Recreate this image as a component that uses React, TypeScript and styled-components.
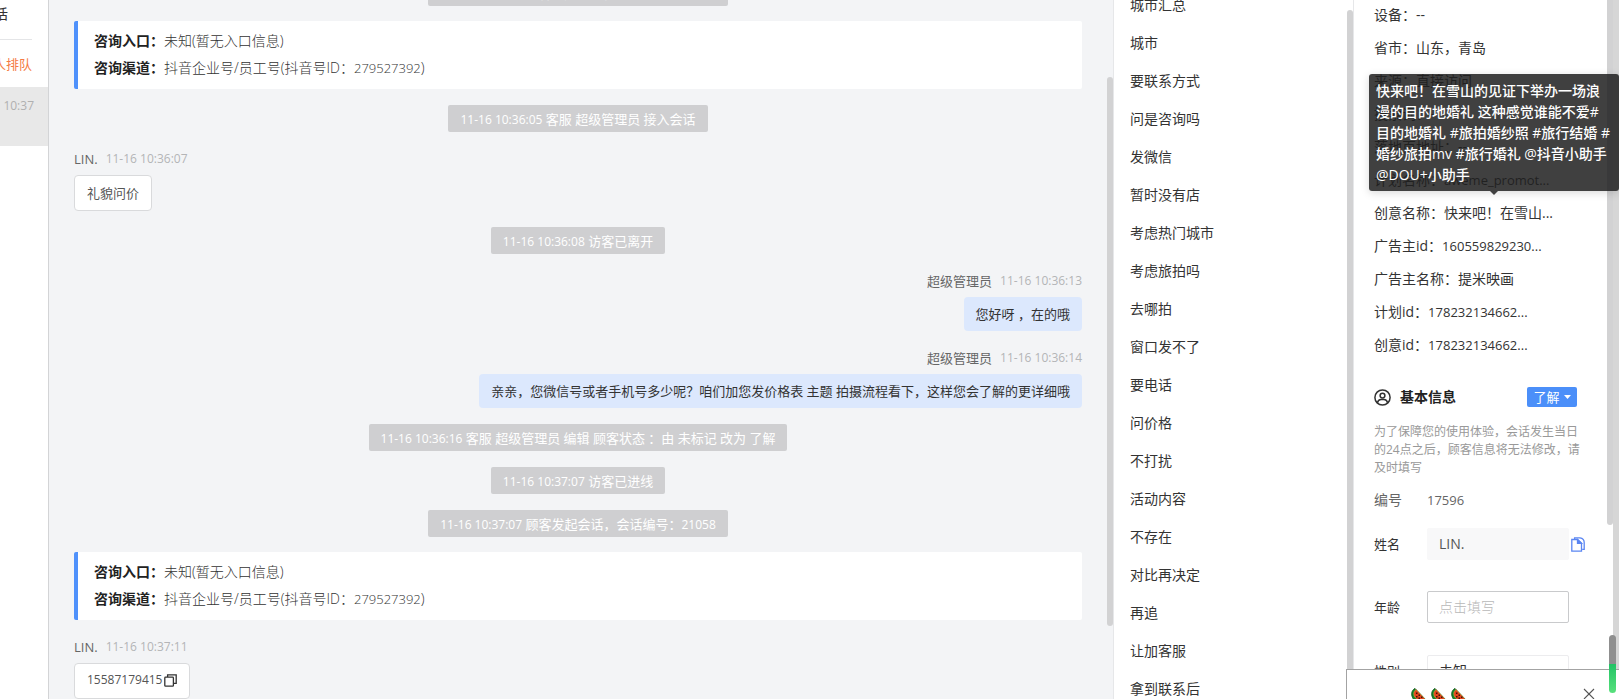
import React from "react";
import styled, { createGlobalStyle, css } from "styled-components";

const GlobalStyle = createGlobalStyle`
  * { box-sizing: border-box; }
  body {
    margin: 0;
    overflow: hidden;
    background: #fff;
    color: #333;
    font-family: "Open Sans", "Noto Sans CJK SC", sans-serif;
    font-size: 14px;
  }
  button, input, select { font: inherit; }
`;

const Page = styled.div`
  display: flex;
  height: 100vh;
  overflow: hidden;
`;

/* Session list */
const Sessions = styled.aside`
  flex: 0 0 49px;
  border-right: 1px solid #d3d4d6;
  overflow: hidden;
  font-size: 13px;
`;
const SessionsTitle = styled.div`
  display: flex;
  justify-content: flex-end;
  height: 40px;
  margin-right: 16px;
  padding-right: 24px;
  line-height: 28px;
  font-size: 14px;
  white-space: nowrap;
  border-bottom: 1px solid #e4e5e7;
`;
const Queue = styled.div`
  display: flex;
  justify-content: flex-end;
  height: 47px;
  padding-right: 16px;
  line-height: 48px;
  color: #f57a45;
  white-space: nowrap;
`;
const SessionItem = styled.div`
  display: flex;
  justify-content: flex-end;
  height: 59px;
  padding: 9px 14px 0 0;
  background: #e8e8e8;
  color: #b0b0b0;
  font-size: 12px;
  line-height: 20px;
`;

/* Scroll bars */
const Thumb = styled.div<{ $top: string; $bottom: string; $right?: number }>`
  position: absolute;
  top: ${(p) => p.$top};
  bottom: ${(p) => p.$bottom};
  right: ${(p) => p.$right ?? 0}px;
  width: 6px;
  border-radius: 3px;
  background: #d2d2d3;
`;

/* Conversation */
const Chat = styled.main`
  position: relative;
  flex: 1 1 0;
  min-width: 0;
  overflow: hidden;
  background: #f3f4f6;
`;
const Log = styled.div`
  display: flex;
  flex-direction: column;
  align-items: center;
  gap: 16px;
  margin-top: -21px;
  padding: 0 31px 24px 25px;
`;
const Num = styled.span`
  font-size: 12px;
  line-height: 1;
`;
const Latin = styled.span`
  font-size: 13px;
  line-height: 1;
`;
const Notice = styled.div`
  height: 27px;
  padding: 0 12px;
  border-radius: 2px;
  background: #cfcfd1;
  color: #fff;
  font-size: 13px;
  line-height: 28px;
  white-space: pre;
`;
const Card = styled.section`
  align-self: stretch;
  margin-top: -1px;
  padding: 6px 16px 8px;
  border-left: 4px solid #4f91fb;
  border-radius: 2px;
  background: #fff;
  line-height: 27px;
  font-weight: 300;
  strong { color: #222; font-weight: 700; }
`;
const Message = styled.article<{ $own?: boolean }>`
  align-self: ${(p) => (p.$own ? "flex-end" : "flex-start")};
  display: flex;
  flex-direction: column;
  align-items: ${(p) => (p.$own ? "flex-end" : "flex-start")};
  gap: 7px;
  margin-top: 2px;
`;
const Meta = styled.header`
  display: flex;
  gap: 8px;
  color: #666;
  font-size: 13px;
  line-height: 18px;
  time { color: #b4b5b7; font-size: 12px; }
`;
const Bubble = styled.div<{ $own?: boolean }>`
  display: flex;
  align-items: center;
  gap: 2px;
  height: ${(p) => (p.$own ? 34 : 36)}px;
  padding: 0 12px 2px;
  border-radius: 4px;
  font-size: 13px;
  white-space: pre;
  ${(p) =>
    p.$own
      ? css`background: #dce8fd; color: #333;`
      : css`background: #fff; color: #555; border: 1px solid #d9dadc;`}
`;
const IconButton = styled.button`
  display: inline-flex;
  padding: 0;
  border: 0;
  background: none;
  color: inherit;
`;

/* Quick replies */
const Replies = styled.nav`
  position: relative;
  flex: 0 0 240px;
  border-left: 1px solid #e6e7e9;
  overflow: hidden;
  background: #fff;
`;
const ReplyList = styled.ul`
  margin: -14px 0 0;
  padding: 0 16px;
  list-style: none;
`;
const Reply = styled.li`
  height: 38px;
  line-height: 38px;
  color: #333;
`;

/* Visitor details */
const Details = styled.aside`
  position: relative;
  flex: 0 0 266px;
  border-left: 1px solid #e6e7e9;
  overflow: hidden;
  background: #fff;
`;
const Track = styled.div`
  position: absolute;
  inset: 0 0 0 auto;
  width: 6px;
  background: #d6d6d6;
`;
const DetailsBody = styled.div`
  margin-top: -2px;
  padding: 0 38px 0 20px;
`;
const Facts = styled.dl`
  margin: 0;
`;
const Fact = styled.div`
  display: flex;
  height: 33px;
  line-height: 33px;
  white-space: nowrap;
  dt, dd { margin: 0; }
`;
const SectionHead = styled.div`
  display: flex;
  align-items: center;
  height: 20px;
  margin: 26px 4px 0 0;
  h2 {
    flex: 1;
    margin: 0 0 0 9px;
    color: #222;
    font-size: 14px;
    font-weight: 700;
    line-height: 20px;
  }
`;
const Status = styled.button`
  display: flex;
  align-items: center;
  justify-content: center;
  gap: 4px;
  width: 50px;
  height: 20px;
  padding: 0 0 1px;
  border: 0;
  border-radius: 2px;
  background: #4b8ff9;
  color: #fff;
  font-size: 13px;
  line-height: 18px;
`;
const Hint = styled.p`
  margin: 16px 0 0;
  color: #999;
  font-size: 12px;
  line-height: 18px;
`;
const Field = styled.div<{ $gap: number }>`
  display: flex;
  align-items: center;
  height: 32px;
  margin-top: ${(p) => p.$gap}px;
  label { flex: 0 0 53px; padding-bottom: 2px; font-size: 13px; }
`;
const Code = styled.div`
  display: flex;
  margin-top: 11px;
  height: 24px;
  line-height: 24px;
  color: #666;
  > :first-child { flex: 0 0 53px; }
  > :last-child { line-height: 24px; }
`;
const TextInput = styled.input<{ $plain?: boolean }>`
  width: 142px;
  height: 32px;
  margin-right: 2px;
  padding: 0 11px 2px;
  border: 1px solid ${(p) => (p.$plain ? "#f8f8f9" : "#c9cacc")};
  border-radius: 2px;
  background: ${(p) => (p.$plain ? "#f8f8f9" : "#fff")};
  color: #555;
  font-size: 14px;
  outline: 0;
  &::placeholder { color: #b8b8b8; font-weight: 300; }
`;
const Select = styled.select`
  width: 142px;
  height: 32px;
  padding: 0 11px 2px;
  border: 1px solid #ececee;
  border-radius: 2px;
  background: #fff;
  color: #333;
  appearance: none;
`;

const Tooltip = styled.div`
  position: absolute;
  top: 74px;
  right: 0;
  width: 250px;
  padding: 6px 7px;
  border-radius: 3px;
  background: rgba(30, 30, 30, 0.85);
  color: #fff;
  font-weight: 500;
  line-height: 21px;
  white-space: nowrap;
  box-shadow: 0 2px 8px rgba(0, 0, 0, 0.15);
  &::after {
    content: "";
    position: absolute;
    top: 100%;
    left: 121px;
    border: 4px solid transparent;
    border-top-color: #404040;
    border-bottom: 0;
  }
`;

const Popup = styled.div`
  position: absolute;
  right: 0;
  bottom: 0;
  display: flex;
  align-items: flex-start;
  justify-content: space-between;
  width: 273px;
  height: 30px;
  padding: 18px 24px 0 64px;
  overflow: hidden;
  border: 1px solid #a3a3a3;
  border-width: 1px 0 0 1px;
  background: #fff;
  color: #555;
`;
const Melons = styled.div`
  display: flex;
  gap: 4px;
`;
const Meter = styled.div`
  position: absolute;
  right: 3px;
  bottom: 6px;
  width: 7px;
  height: 58px;
  border-radius: 4px;
  background: linear-gradient(#8f8f8f 0 50%, #22c365 50%, #58e07c 100%);
`;

const CopyDark = () => (
  <svg width="13" height="13" viewBox="0 0 13 13" fill="none" stroke="#333" strokeWidth="1.3">
    <path d="M3.600 3V.8h8.600v8.600H10" />
    <rect x=".8" y="3.2" width="8.6" height="9" rx=".8" />
  </svg>
);
const CopyBlue = () => (
  <svg width="14" height="15" viewBox="0 0 14 15" fill="none" stroke="#5b86f2" strokeWidth="1.3">
    <path d="M3.600 2.200V.8h5.400q4.200.6 4.200 4.600v7h-2" />
    <path d="M.8 2.500h5.700l4 3.800v7.800H.8z" />
    <path d="M6.500 2.500v3.800h4z" fill="#5b86f2" />
  </svg>
);
const Person = () => (
  <svg width="17" height="17" viewBox="0 0 17 17" fill="none" stroke="#333" strokeWidth="1.5">
    <circle cx="8.5" cy="8.5" r="7.6" />
    <circle cx="8.5" cy="6.6" r="2.4" />
    <path d="M3.400 13.800c.5-2.200 2-3.200 3.600-3.200h3c1.600 0 3.100 1 3.600 3.200" />
  </svg>
);
const Caret = () => (
  <svg width="7" height="4" viewBox="0 0 7 4" fill="#fff">
    <path d="M0 0h7L3.500 4z" />
  </svg>
);
const Close = () => (
  <svg width="12" height="12" viewBox="0 0 12 12" fill="none" stroke="#555" strokeWidth="1.1">
    <path d="M1 1l10 10M11 1L1 11" />
  </svg>
);
const Melon = () => (
  <svg width="16" height="16" viewBox="0 0 16 16">
    <path d="M4 .5C.5 2.500 0 6 1.500 9.500S8 15.500 15.500 12.500z" fill="#128a2c" stroke="#064f14" strokeWidth=".9" />
    <path d="M5 1.500C2.500 3.500 2.200 6.500 3.800 9S9 13 14.800 12z" fill="#e3431c" stroke="#d9a23a" strokeWidth=".6" />
    <path d="M5 4.500h1.500V6H5zM7.500 6.500H9V8H7.500zM5 8h1.500v1.500H5zM10 8.500h1.500V10H10zM7.500 9.500H9V11H7.500z" fill="#421408" />
  </svg>
);

const EntryCard = () => (
  <Card>
    <div><strong>咨询入口：</strong>未知(暂无入口信息)</div>
    <div><strong>咨询渠道：</strong>抖音企业号/员工号(抖音号ID：<Latin>279527392</Latin>)</div>
  </Card>
);

const replies = [
  "城市汇总", "城市", "要联系方式", "问是咨询吗", "发微信", "暂时没有店", "考虑热门城市",
  "考虑旅拍吗", "去哪拍", "窗口发不了", "要电话", "问价格", "不打扰", "活动内容",
  "不存在", "对比再决定", "再追", "让加客服", "拿到联系后",
];

const facts: [string, string][] = [
  ["设备：", "--"],
  ["省市：", "山东，青岛"],
  ["来源：", "直接访问"],
  ["搜索词：", "--"],
  ["落地页地址：", "--"],
  ["计划名称：", "aweme_promot..."],
  ["创意名称：", "快来吧！在雪山..."],
  ["广告主id：", "160559829230..."],
  ["广告主名称：", "提米映画"],
  ["计划id：", "178232134662..."],
  ["创意id：", "178232134662..."],
];

export default function App() {
  return (
    <>
      <GlobalStyle />
      <Page>
        <Sessions>
          <SessionsTitle>会话</SessionsTitle>
          <Queue>0人排队</Queue>
          <SessionItem>10:37</SessionItem>
        </Sessions>

        <Chat>
          <Log>
            <Notice><Num>11-16 10:36:05</Num> 顾客发起会话，会话编号：<Num>21057</Num></Notice>
            <EntryCard />
            <Notice><Num>11-16 10:36:05</Num> 客服 超级管理员 接入会话</Notice>
            <Message>
              <Meta><span>LIN.</span><time>11-16 10:36:07</time></Meta>
              <Bubble>礼貌问价</Bubble>
            </Message>
            <Notice><Num>11-16 10:36:08</Num> 访客已离开</Notice>
            <Message $own>
              <Meta><span>超级管理员</span><time>11-16 10:36:13</time></Meta>
              <Bubble $own>您好呀 ，在的哦</Bubble>
            </Message>
            <Message $own>
              <Meta><span>超级管理员</span><time>11-16 10:36:14</time></Meta>
              <Bubble $own>亲亲，您微信号或者手机号多少呢？咱们加您发价格表 主题 拍摄流程看下，这样您会了解的更详细哦</Bubble>
            </Message>
            <Notice><Num>11-16 10:36:16</Num> 客服 超级管理员 编辑 顾客状态 ：由 未标记 改为 了解</Notice>
            <Notice><Num>11-16 10:37:07</Num> 访客已进线</Notice>
            <Notice><Num>11-16 10:37:07</Num> 顾客发起会话，会话编号：<Num>21058</Num></Notice>
            <EntryCard />
            <Message>
              <Meta><span>LIN.</span><time>11-16 10:37:11</time></Meta>
              <Bubble>
                <Num>15587179415</Num>
                <IconButton aria-label="复制"><CopyDark /></IconButton>
              </Bubble>
            </Message>
          </Log>
          <Thumb $top="77px" $bottom="73px" />
        </Chat>

        <Replies>
          <ReplyList>
            {replies.map((r) => <Reply key={r}>{r}</Reply>)}
          </ReplyList>
          <Thumb $top="10px" $bottom="0px" />
        </Replies>

        <Details>
          <DetailsBody>
            <Facts>
              {facts.map(([k, v]) => (
                <Fact key={k}>
                  <dt>{k}</dt>
                  <dd>{/^\w[\w.]+$/.test(v) ? <Latin>{v}</Latin> : v}</dd>
                </Fact>
              ))}
            </Facts>
            <SectionHead>
              <Person />
              <h2>基本信息</h2>
              <Status>了解<Caret /></Status>
            </SectionHead>
            <Hint>为了保障您的使用体验，会话发生当日的24点之后，顾客信息将无法修改，请及时填写</Hint>
            <Code><span>编号</span><Latin>17596</Latin></Code>
            <Field $gap={16}>
              <label htmlFor="name">姓名</label>
              <TextInput id="name" $plain defaultValue="LIN." />
              <IconButton aria-label="复制姓名"><CopyBlue /></IconButton>
            </Field>
            <Field $gap={31}>
              <label htmlFor="age">年龄</label>
              <TextInput id="age" placeholder="点击填写" />
            </Field>
            <Field $gap={32}>
              <label htmlFor="sex">性别</label>
              <Select id="sex"><option>未知</option></Select>
            </Field>
          </DetailsBody>
          <Thumb $top="-4px" $bottom="174px" $right={6} />
          <Track />
        </Details>
      </Page>

      <Tooltip role="tooltip">
        快来吧！在雪山的见证下举办一场浪<br />
        漫的目的地婚礼 这种感觉谁能不爱#<br />
        目的地婚礼 #旅拍婚纱照 #旅行结婚 #<br />
        婚纱旅拍mv #旅行婚礼 @抖音小助手<br />
        @DOU+小助手
      </Tooltip>
      <Popup>
        <Melons><Melon /><Melon /><Melon /></Melons>
        <IconButton aria-label="关闭"><Close /></IconButton>
      </Popup>
      <Meter />
    </>
  );
}
